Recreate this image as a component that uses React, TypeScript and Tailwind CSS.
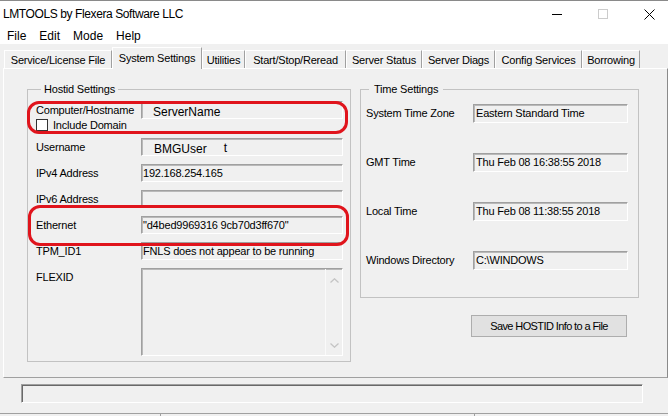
import React from "react";

const tabs = [
  { label: "Service/License File", w: "w-[108px]" },
  { label: "System Settings", w: "w-[90px]", active: true },
  { label: "Utilities", w: "w-[43px]" },
  { label: "Start/Stop/Reread", w: "w-[101px]" },
  { label: "Server Status", w: "w-[76px]" },
  { label: "Server Diags", w: "w-[73px]" },
  { label: "Config Services", w: "w-[87px]" },
  { label: "Borrowing", w: "w-[58px]" },
];

const timeRows = [
  { label: "System Time Zone", value: "Eastern Standard Time" },
  { label: "GMT Time", value: "Thu Feb 08 16:38:55 2018" },
  { label: "Local Time", value: "Thu Feb 08 11:38:55 2018" },
  { label: "Windows Directory", value: "C:\\WINDOWS" },
];

const sunken =
  "flex items-center overflow-hidden whitespace-nowrap border border-t-[#a0a0a0] border-l-[#a0a0a0] border-r-white border-b-white bg-[#f0f0f0] shadow-[inset_1px_1px_0_#b9b9b9]";

function Box({ children, className = "" }: { children?: React.ReactNode; className?: string }) {
  return <div className={`${sunken} ${className}`}>{children}</div>;
}

function HostRow({ label, children }: { label: string; children?: React.ReactNode }) {
  return (
    <div className="flex h-[18px] items-center">
      <div className="w-[105px] text-[11px] leading-[13px] tracking-[-0.2px]">{label}</div>
      <Box className="h-[18px] w-[202px] pl-[1px] text-[11px] tracking-[-0.2px]">{children}</Box>
    </div>
  );
}

export default function App() {
  return (
    <div className="relative h-[416px] w-[668px] overflow-hidden bg-[#f0f0f0] font-['Liberation_Sans',Arial,sans-serif] text-black">
      {/* title bar */}
      <div className="h-[1px] bg-[#8a8a8a]" />
      <div className="flex h-[26px] items-center bg-white">
        <span className="pl-[3px] text-[12px] tracking-[-0.4px]">LMTOOLS by Flexera Software LLC</span>
        <div className="-mr-[4px] ml-auto flex h-full">
          <div className="flex w-[46px] items-center justify-center">
            <div className="h-[1px] w-[10px] bg-black" />
          </div>
          <div className="flex w-[46px] items-center justify-center">
            <div className="h-[10px] w-[10px] border border-[#cccccc]" />
          </div>
          <div className="flex w-[46px] items-center justify-center">
            <svg width="11" height="11" viewBox="0 0 11 11">
              <path d="M0.5 0.5 L10.5 10.5 M10.5 0.5 L0.5 10.5" stroke="#000" strokeWidth="1" />
            </svg>
          </div>
        </div>
      </div>

      {/* menu */}
      <div className="flex h-[17px] items-center gap-[13px] bg-white pl-[7px] text-[12px]">
        <span>File</span>
        <span>Edit</span>
        <span>Mode</span>
        <span>Help</span>
      </div>

      {/* tabs */}
      <div className="mt-[3px] flex h-[21px] items-end pl-[4px] text-[11px] tracking-[-0.2px]">
        {tabs.map((t) =>
          t.active ? (
            <div
              key={t.label}
              className={`${t.w} relative z-10 -mb-[1px] flex h-[22px] items-center justify-center border-l border-t border-r border-l-white border-t-white border-r-[#a0a0a0] bg-[#f0f0f0] pb-[1px]`}
            >
              {t.label}
            </div>
          ) : (
            <div
              key={t.label}
              className={`${t.w} flex h-[18px] items-center justify-center border-l border-t border-r border-l-white border-t-white border-r-[#a0a0a0] pt-[1px]`}
            >
              {t.label}
            </div>
          )
        )}
      </div>

      {/* tab panel */}
      <div className="ml-[3px] h-[310px] w-[665px] border border-t-white border-l-white border-r-[#8a8a8a] border-b-[#a0a0a0]">
        <div className="flex items-start pl-[23px] pt-[13px]">
          <fieldset className="w-[324px] border border-[#c2c2c2] pb-[5px] pl-[8px]">
            <legend className="ml-[5px] px-[3px] text-[11px] leading-[14px] tracking-[-0.2px]">Hostid Settings</legend>
            <div className="mt-[5px] flex flex-col">
              <HostRow label="Computer/Hostname">
                <span className="pl-[10px] pt-[3px] text-[12px] tracking-normal">ServerName</span>
              </HostRow>
              <div className="flex h-[12px] items-center gap-[5px]">
                <div className="h-[12px] w-[12px] border border-[#333333] bg-white" />
                <span className="text-[11px] leading-[13px] tracking-[-0.2px]">Include Domain</span>
              </div>
              <div className="mt-[7px] flex flex-col gap-[8px]">
                <HostRow label="Username">
                  <span className="pl-[11px] pt-[3px] text-[12px] tracking-normal">BMGUser</span>
                  <span className="ml-[17px] pt-[1px] text-[12px] tracking-normal">t</span>
                </HostRow>
                <HostRow label="IPv4 Address">192.168.254.165</HostRow>
                <HostRow label="IPv6 Address" />
                <HostRow label="Ethernet">"d4bed9969316 9cb70d3ff670"</HostRow>
                <HostRow label="TPM_ID1">FNLS does not appear to be running</HostRow>
                <div className="flex items-start">
                  <div className="w-[105px] pt-[3px] text-[11px] leading-[13px] tracking-[-0.2px]">FLEXID</div>
                  <Box className="h-[88px] w-[202px] justify-end">
                    <div className="flex h-full w-[17px] flex-col items-center justify-between border-l border-l-[#fafafa] pb-[7px] pt-[9px]">
                      <svg width="9" height="5" viewBox="0 0 9 5">
                        <path d="M0.5 4.5 L4.5 0.8 L8.5 4.5" fill="none" stroke="#c4c4c4" strokeWidth="1.3" />
                      </svg>
                      <svg width="9" height="5" viewBox="0 0 9 5">
                        <path d="M0.5 0.5 L4.5 4.2 L8.5 0.5" fill="none" stroke="#c4c4c4" strokeWidth="1.3" />
                      </svg>
                    </div>
                  </Box>
                </div>
              </div>
            </div>
          </fieldset>

          <div className="ml-[9px] flex flex-col">
            <fieldset className="w-[279px] border border-[#c2c2c2] pb-[27px] pl-[5px]">
              <legend className="ml-[3px] px-[5px] text-[11px] leading-[14px] tracking-[-0.2px]">Time Settings</legend>
              <div className="mt-[8px] flex flex-col gap-[30px]">
                {timeRows.map((r) => (
                  <div key={r.label} className="flex h-[19px] items-center">
                    <div className="w-[107px] text-[11px] leading-[13px] tracking-[-0.2px]">{r.label}</div>
                    <Box className="h-[19px] w-[155px] pl-[2px] text-[11px] tracking-[-0.2px]">{r.value}</Box>
                  </div>
                ))}
              </div>
            </fieldset>
            <button className="ml-[111px] mt-[17px] h-[22px] w-[156px] border border-[#adadad] bg-[#e1e1e1] text-[11px] tracking-[-0.6px]">
              Save HOSTID Info to a File
            </button>
          </div>
        </div>
      </div>

      {/* progress field */}
      <div className="ml-[21px] mt-[6px] h-[19px] w-[622px] border border-t-[#a0a0a0] border-l-[#a0a0a0] border-r-white border-b-white shadow-[inset_1px_1px_0_#696969]" />

      {/* status bar */}
      <div className="mt-[10px] flex h-[3px] border-t border-t-[#a0a0a0]">
        <div className="w-[161px] border-r border-r-[#a0a0a0]" />
        <div className="w-[314px] border-r border-r-[#a0a0a0]" />
      </div>

      {/* red annotation outlines */}
      <div className="absolute left-[27px] top-[101px] h-[33px] w-[321px] rounded-[12px] border-[3px] border-[#e0141c]" />
      <div className="absolute left-[28px] top-[205px] h-[41px] w-[321px] rounded-[12px] border-[3px] border-[#e0141c]" />
    </div>
  );
}
